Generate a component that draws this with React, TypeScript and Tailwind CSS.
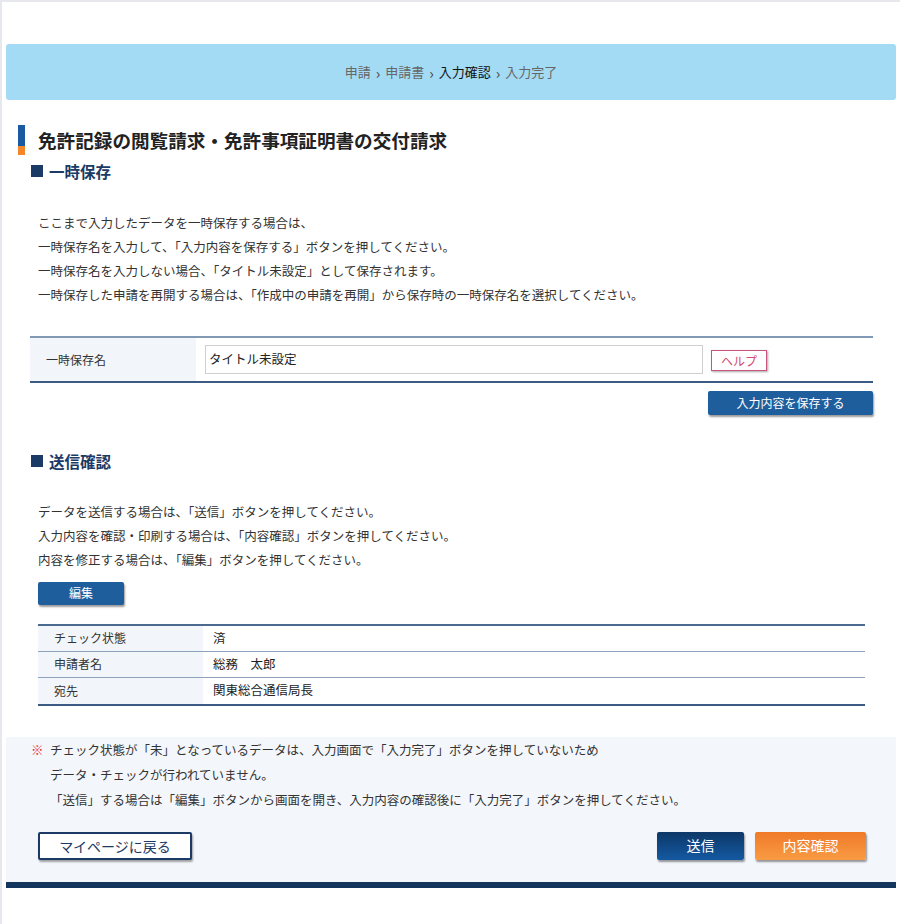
const font = '[font-family:"Noto_Sans_CJK_JP","Noto_Sans",sans-serif]';

const SectionHeading = ({ children }: { children: React.ReactNode }) => (
  <h2 className="flex items-center gap-[6px] pl-[25px] text-[15.5px] font-bold leading-[20px] text-[#1b3a66]">
    <span className="inline-block h-[12px] w-[12px] bg-[#1b3a66]" />
    {children}
  </h2>
);

const rows = [
  { label: 'チェック状態', value: '済' },
  { label: '申請者名', value: '総務\u3000太郎' },
  { label: '宛先', value: '関東総合通信局長' },
];

export default function App() {
  return (
    <div className={`${font} min-h-[924px] border-l-2 border-t-2 border-[#e6e8ee] bg-white px-1 text-[#333]`}>
      {/* breadcrumb */}
      <div className="mt-[42px] flex h-[56px] items-center justify-center gap-[5px] rounded-[3px] bg-[#a3dbf4] text-[13px] text-[#666]">
        <span>申請</span>
        <span className="text-[15px] leading-none text-[#444]">›</span>
        <span>申請書</span>
        <span className="text-[15px] leading-none text-[#444]">›</span>
        <span className="text-[#111]">入力確認</span>
        <span className="text-[15px] leading-none text-[#444]">›</span>
        <span>入力完了</span>
      </div>

      {/* title */}
      <div className="mt-[25px] flex items-center pl-[12px]">
        <div className="flex w-[7px] flex-col">
          <span className="h-[21px] bg-[#1a5aa0]" />
          <span className="h-[9px] bg-[#f5872a]" />
        </div>
        <h1 className="ml-[13px] text-[18.6px] font-bold leading-none text-[#222]">
          免許記録の閲覧請求・免許事項証明書の交付請求
        </h1>
      </div>

      <div className="mt-[6px]">
        <SectionHeading>一時保存</SectionHeading>
      </div>

      <div className="mt-[30px] pl-[32px] text-[12.5px] leading-[24px]">
        <p>ここまで入力したデータを一時保存する場合は、</p>
        <p>一時保存名を入力して、「入力内容を保存する」ボタンを押してください。</p>
        <p>一時保存名を入力しない場合、「タイトル未設定」として保存されます。</p>
        <p>一時保存した申請を再開する場合は、「作成中の申請を再開」から保存時の一時保存名を選択してください。</p>
      </div>

      {/* temp save table */}
      <div className="ml-[24px] mr-[23px] mt-[29px]">
        <div className="flex h-[47px] border-b-2 border-t-2 border-b-[#3b5b82] border-t-[#8199b4]">
          <div className="flex w-[166px] items-center bg-[#f2f5f9] pl-[16px] text-[12px] text-[#333]">
            一時保存名
          </div>
          <div className="flex items-center pl-[9px]">
            <div className="flex h-[29px] w-[498px] items-center border border-[#cfcfcf] bg-white pl-[3px] text-[12.5px] text-[#222]">
              タイトル未設定
            </div>
            <button className="ml-[8px] mt-[2px] h-[21px] w-[56px] border border-[#c8567c] bg-white text-[12px] leading-none text-[#d04a72] shadow-[1px_1px_2px_rgba(0,0,0,0.35)]">
              ヘルプ
            </button>
          </div>
        </div>
        <div className="mt-[8px] flex justify-end">
          <button className="h-[24px] w-[165px] rounded-[2px] bg-[#1f5e9c] text-[12px] text-white shadow-[1px_2px_2px_rgba(0,0,0,0.4)]">
            入力内容を保存する
          </button>
        </div>
      </div>

      <div className="mt-[36px]">
        <SectionHeading>送信確認</SectionHeading>
      </div>

      <div className="mt-[29px] pl-[32px] text-[12.5px] leading-[24px]">
        <p>データを送信する場合は、「送信」ボタンを押してください。</p>
        <p>入力内容を確認・印刷する場合は、「内容確認」ボタンを押してください。</p>
        <p>内容を修正する場合は、「編集」ボタンを押してください。</p>
      </div>

      <div className="mt-[7px] pl-[32px]">
        <button className="h-[23px] w-[86px] rounded-[2px] bg-[#1f5e9c] text-[12px] text-white shadow-[1px_2px_2px_rgba(0,0,0,0.4)]">
          編集
        </button>
      </div>

      {/* check table */}
      <div className="ml-[32px] mr-[31px] mt-[19px] border-b-2 border-t-2 border-b-[#3b5b82] border-t-[#4a6a90]">
        {rows.map((r, i) => (
          <div
            key={r.label}
            className={`flex h-[26px] ${i < rows.length - 1 ? 'border-b border-[#8ea3bb]' : ''}`}
          >
            <div className="flex w-[165px] items-center bg-[#f2f5f9] pl-[16px] text-[12px] text-[#333]">
              {r.label}
            </div>
            <div className="flex items-center pl-[10px] text-[12.5px] text-[#222]">{r.value}</div>
          </div>
        ))}
      </div>

      {/* notice + actions */}
      <div className="mt-[31px] bg-[#f3f6fa] pb-[22px] text-[12.5px] leading-[25px]">
        <div className="flex pl-[25px]">
          <span className="w-[19px] text-[#e5323a]">※</span>
          <div>
            <p>チェック状態が「未」となっているデータは、入力画面で「入力完了」ボタンを押していないため</p>
            <p>データ・チェックが行われていません。</p>
            <p>「送信」する場合は「編集」ボタンから画面を開き、入力内容の確認後に「入力完了」ボタンを押してください。</p>
          </div>
        </div>
        <div className="mt-[20px] flex items-center pl-[32px] pr-[30px]">
          <button className="h-[28px] w-[154px] rounded-[2px] border-2 border-[#1b3a66] bg-white text-[14px] leading-none text-[#1b3a66] shadow-[1px_2px_2px_rgba(0,0,0,0.35)]">
            マイページに戻る
          </button>
          <div className="ml-auto flex gap-[11px]">
            <button className="h-[28px] w-[87px] rounded-[2px] bg-gradient-to-b from-[#0d3868] to-[#1459a3] text-[14px] text-white shadow-[1px_2px_2px_rgba(0,0,0,0.4)]">
              送信
            </button>
            <button className="h-[28px] w-[111px] rounded-[2px] bg-gradient-to-b from-[#ef7a28] to-[#f99b43] text-[14px] text-white shadow-[1px_2px_2px_rgba(0,0,0,0.4)]">
              内容確認
            </button>
          </div>
        </div>
      </div>
      <div className="h-[6px] bg-[#14355d]" />
    </div>
  );
}
